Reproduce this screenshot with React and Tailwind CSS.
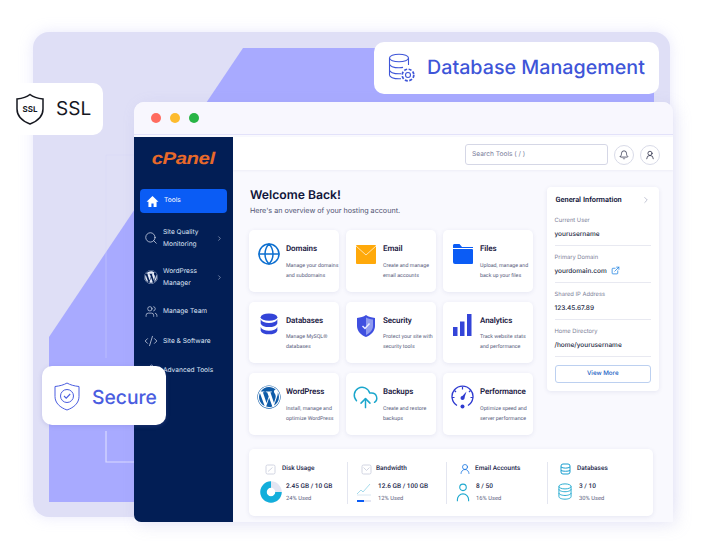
import React from "react";
import { Search, Users, CodeXml, Settings, ChevronRight, Globe, CloudUpload, Bell, UserRound, ExternalLink } from "lucide-react";
import { FaWordpress } from "react-icons/fa";

const Home = () => (
  <svg width="13" height="13" viewBox="0 0 24 24" fill="#fff"><path d="M12 2 1 12.500h3.500V22h5.500v-6.500h4V22h5.500v-9.500H23L12 2z" /></svg>
);

const Mail = () => (
  <svg width="22" height="21" viewBox="0 0 22 21"><rect x="1" y="1" width="20" height="19" fill="#ffa90a" rx="1" /><path d="M1 2 11 11 21 2" fill="none" stroke="#ffe3ae" strokeWidth="1" /></svg>
);
const Folder = () => (
  <svg width="22" height="22" viewBox="0 0 22 22"><path d="M1 2.500C1 1.600 1.600 1 2.500 1h5L10 4h-9z" fill="#0b5cf5" /><path d="M1 6h19a1 1 0 0 1 1 1v13a1 1 0 0 1-1 1H3a2 2 0 0 1-2-2z" fill="#0b5cf5" /><path d="M1 4.500h20" stroke="#0b5cf5" strokeWidth="1" /></svg>
);
const DbFilled = () => (
  <svg width="20" height="25" viewBox="0 0 18 24" fill="#3344d8"><ellipse cx="9" cy="4" rx="8" ry="3.500" /><path d="M1 6c1 2.500 4 3.500 8 3.500S16 8.500 17 6v4c-1 2.500-4 3.500-8 3.500S2 12.500 1 10z" /><path d="M1 12.500c1 2.500 4 3.500 8 3.500s7-1 8-3.500V16c-1 2.500-4 3.500-8 3.500S2 18.500 1 16z" transform="translate(0 1)" /></svg>
);
const ShieldFill = () => (
  <svg width="20" height="24" viewBox="0 0 20 24"><path d="M10 1C7.500 3 4.500 3.500 1 4v8c0 5 4 9 9 11 5-2 9-6 9-11V4c-3.500-.5-6.500-1-9-3z" fill="#3f4fe0" /><path d="M10 3.500v17.500c4-2 7-5 7-9V5.500C14 5.200 12 4.700 10 3.500z" fill="#8f9bf0" /><path d="M6.500 12l2.500 2.500 4.500-5" fill="none" stroke="#e9ebff" strokeWidth="1.500" /></svg>
);
const Bars = () => (
  <svg width="19" height="23" viewBox="0 0 19 23" fill="#3344d8"><rect x="0" y="13" width="4.500" height="9" /><rect x="7" y="7.500" width="4.500" height="14.500" /><rect x="14" y="0" width="4.500" height="22" /></svg>
);
const Gauge = () => (
  <svg width="23" height="24" viewBox="0 0 23 24" fill="none" stroke="#2f3bd0"><path d="M6 20.500A10.500 10.500 0 1 1 17 20.500" strokeWidth="1.300" /><path d="M11.500 2v2.500M3.500 5.500l1.500 1.500M1 12.500h2.500M19.500 5.500 18 7M22 12.500h-2.500" strokeWidth="1.200" /><path d="M10 12.500 15.500 6.500 13 14z" fill="#2f3bd0" stroke="none" /><circle cx="11.500" cy="13" r="2" fill="#2f3bd0" stroke="none" /><circle cx="11.500" cy="21.500" r="2" fill="#2f3bd0" stroke="none" /></svg>
);

const cards = [
  ["Domains", "Manage your domains", "and subdomains", <Globe size={24} color="#0c6fd0" strokeWidth={1.500} />],
  ["Email", "Create and manage", "email accounts", <Mail />],
  ["Files", "Upload, manage and", "back up your files", <Folder />],
  ["Databases", "Manage MySQL®", "databases", <DbFilled />],
  ["Security", "Protect your site with", "security tools", <ShieldFill />],
  ["Analytics", "Track website stats", "and performance", <Bars />],
  ["WordPress", "Install, manage and", "optimize WordPress", <FaWordpress size={24} color="#0e5ba8" />],
  ["Backups", "Create and restore", "backups", <CloudUpload size={27} color="#1aa6cc" strokeWidth={1.300} />],
  ["Performance", "Optimize speed and", "server performance", <Gauge />],
];

const info = [
  ["Current User", "yourusername"],
  ["Primary Domain", "yourdomain.com"],
  ["Shared IP Address", "123.45.67.89"],
  ["Home Directory", "/home/yourusername"],
];

const roboto = { fontFamily: "Roboto, 'Liberation Sans', sans-serif" };

function NavItem({ icon, children, arrow }) {
  return (
    <div className="flex items-center h-[24px] pl-[3.500px] pr-[4px] gap-[4.500px] text-[6.600px] leading-[12px] text-[#dfe5f5]">
      <span className="w-[15px] flex justify-center shrink-0">{icon}</span>
      <span className="flex-1 whitespace-nowrap">{children}</span>
      {arrow && <ChevronRight size={7} color="#b8c2da" />}
    </div>
  );
}

function Card({ title, a, b, icon }) {
  return (
    <div className="h-[61.500px] rounded-[5px] bg-white shadow-[0_1px_4px_rgba(60,70,140,0.10)] flex pl-[8px] pt-[11px]">
      <span className="w-[28px] h-[26px] flex items-center justify-center shrink-0 -ml-[2.500px]">{icon}</span>
      <div className="ml-[3.500px] pt-[2px] whitespace-nowrap" style={roboto}>
        <div className="text-[8px] leading-[12px] font-semibold text-[#1d2144] tracking-[-0.1px]">{title}</div>
        <div className="mt-[5.500px] text-[5.300px] leading-[10px] text-[#575c7c]">{a}<br />{b}</div>
      </div>
    </div>
  );
}

function Stat({ title, head, big, value, used, border, width, headCls, bodyCls, bigCls }) {
  return (
    <div className={`${width} h-[42px] ${border ? "border-r border-[#e4e6f0]" : ""}`}>
      <div className={`flex items-center h-[15px] ${headCls}`}>
        {head}
        <span className="text-[6.500px] font-medium text-[#22264a] whitespace-nowrap" style={roboto}>{title}</span>
      </div>
      <div className={`flex items-center mt-[3px] ${bodyCls}`}>
        <span className={`h-[24px] flex items-center justify-center shrink-0 ${bigCls}`}>{big}</span>
        <div className="whitespace-nowrap" style={roboto}>
          <div className="text-[6.500px] leading-[12px] font-medium text-[#22264a]">{value}</div>
          <div className="text-[5.800px] leading-[12px] mt-[1px] text-[#5c6180]">{used}</div>
        </div>
      </div>
    </div>
  );
}

export default function App() {
  return (
    <div className="relative w-[704px] h-[552px] overflow-hidden bg-white [text-rendering:geometricPrecision]" style={{ fontFamily: "Inter, 'Liberation Sans', sans-serif" }}>
      {/* backdrop */}
      <div className="absolute left-[33px] top-[32px] w-[637px] h-[485px] rounded-[16px] bg-[#dfdff6] shadow-[0_0_14px_rgba(190,190,245,0.35)]">
        <svg width="637" height="485" viewBox="0 0 637 485" className="block">
          <polygon points="210,16 621,16 621,470 16,470 16,305" fill="#a8aaff" />
          <path d="M101 123H73V326" fill="none" stroke="#d6d7fb" strokeWidth="1" opacity="0.4" />
          <path d="M73 367V335" fill="none" stroke="#d6d7fb" strokeWidth="1" />
          <path d="M73 399V430H102" fill="none" stroke="#d9daff" strokeWidth="1.200" />
        </svg>
      </div>

      {/* window */}
      <div className="absolute left-[134px] top-[102px] w-[539px] h-[420px] flex flex-col rounded-tl-[10px] rounded-tr-[10px] overflow-hidden bg-[#f9f9fe] shadow-[4px_4px_16px_rgba(150,150,210,0.18)]">
        <div className="h-[33px] shrink-0 bg-[#f8f7fe] border-b border-[#e3e2fa] flex items-center pl-[17px] gap-[9.500px]">
          <span className="w-[9.500px] h-[9.500px] rounded-full bg-[#ff6b5f]" />
          <span className="w-[9.500px] h-[9.500px] rounded-full bg-[#fdbb2e]" />
          <span className="w-[9.500px] h-[9.500px] rounded-full bg-[#28b446]" />
        </div>
        <div className="flex flex-1 min-h-0 mt-[2px]">
          <aside className="w-[99px] shrink-0 bg-[#021e55] rounded-bl-[7px] flex flex-col px-[6px]">
            <div className="h-[52px] flex justify-center items-center pb-[10px]">
              <span className="text-[17px] font-black italic text-[#e8692a] tracking-[-0.4px] leading-none scale-x-[1.2]" style={{ fontFamily: "'Liberation Sans', sans-serif" }}>cPanel</span>
            </div>
            <div className="h-[24px] rounded-[4px] bg-[#0a5cf5] flex items-center pl-[6px] gap-[5px] text-[6.600px] text-white">
              <Home />
              <span>Tools</span>
            </div>
            <div className="flex flex-col mt-[13px]">
              <NavItem icon={<Search size={14} color="#e5eaf7" strokeWidth={1.200} />} arrow>Site Quality<br />Monitoring</NavItem>
              <div className="mt-[15px]"><NavItem icon={<FaWordpress size={14} color="#e5eaf7" />} arrow>WordPress<br />Manager</NavItem></div>
              <div className="mt-[10px]"><NavItem icon={<Users size={13} color="#e5eaf7" strokeWidth={1.200} />}>Manage Team</NavItem></div>
              <div className="mt-[6px]"><NavItem icon={<CodeXml size={14} color="#e5eaf7" strokeWidth={1.200} />}>Site &amp; Software</NavItem></div>
              <div className="mt-[5px]"><NavItem icon={<Settings size={13} color="#e5eaf7" strokeWidth={1.200} />}>Advanced Tools</NavItem></div>
            </div>
          </aside>

          <main className="flex-1 min-w-0 flex flex-col">
            <div className="h-[33px] shrink-0 bg-white shadow-[0_1px_2px_rgba(80,90,150,0.07)] flex items-center justify-end gap-[6px] pr-[13px] pt-[2px]">
              <div className="w-[143px] h-[21px] rounded-[3px] border border-[#d5d7e6] flex items-center pl-[6px] text-[6.600px] text-[#7c809c]">Search Tools ( / )</div>
              <span className="w-[20px] h-[20px] rounded-full border border-[#d9dbe8] flex items-center justify-center"><Bell size={10} color="#1b1e3a" strokeWidth={1.700} /></span>
              <span className="w-[20px] h-[20px] rounded-full border border-[#d9dbe8] flex items-center justify-center"><UserRound size={10} color="#1b1e3a" strokeWidth={1.700} /></span>
            </div>

            <div className="flex-1 min-h-0 pl-[16px] pr-[14px] pt-[17px]">
              <div className="flex justify-between">
                <div className="w-[284px]">
                  <div className="pl-[1px] text-[12.200px] leading-[16px] font-semibold text-[#10143a]">Welcome Back!</div>
                  <div className="pl-[1px] text-[7.200px] leading-[11px] mt-[2px] text-[#4f5372]">Here's an overview of your hosting account.</div>
                  <div className="grid grid-cols-3 gap-x-[7px] gap-y-[10px] mt-[14px]">
                    {cards.map(([t, a, b, i]) => <Card key={t} title={t} a={a} b={b} icon={i} />)}
                  </div>
                </div>
                <div className="w-[112.500px] h-[204px] rounded-[4px] bg-white shadow-[0_1px_4px_rgba(60,70,140,0.10)] px-[8px] pt-[8px]">
                  <div className="flex items-center justify-between h-[10px] mb-[3.500px] pl-[1px]">
                    <span className="text-[7.400px] font-semibold text-[#14183c]" style={roboto}>General Information</span>
                    <ChevronRight size={10} color="#b5b8ca" />
                  </div>
                  {info.map(([k, v], i) => (
                    <div key={k} className="border-b border-[#e8e9f1] h-[37px] pt-[7px]">
                      <div className="text-[5.800px] leading-[10px] text-[#7c8098]">{k}</div>
                      <div className="flex items-center gap-[4px] mt-[3px] text-[6.500px] leading-[10px] font-medium text-[#1b1f42]">
                        {v}
                        {i === 1 && <ExternalLink size={9} color="#1a7fe0" />}
                      </div>
                    </div>
                  ))}
                  <div className="mt-[8px] h-[18px] rounded-[3px] border border-[#bcd0f0] flex items-center justify-center text-[6.200px] font-medium text-[#1c5fc4]">View More</div>
                </div>
              </div>

              <div className="mt-[14px] w-[403.500px] h-[67px] rounded-[5px] bg-white shadow-[0_1px_4px_rgba(60,70,140,0.10)] flex items-start pt-[13px]">
                <Stat width="w-[99px]" border title="Disk Usage" value="2.45 GB / 10 GB" used="24% Used" headCls="pl-[16px] gap-[6px]" bodyCls="pl-[11px] gap-[4px]" bigCls="w-[22px]"
                  head={<svg width="11" height="11" viewBox="0 0 11 11" fill="none" stroke="#c7cadb" strokeWidth="0.800"><rect x="1" y="1" width="9" height="9" rx="1.500" /><path d="M3 7.500 7.500 3.500" /></svg>}
                  big={<svg width="22" height="22" viewBox="0 0 22 22"><circle cx="11" cy="11" r="7.500" fill="none" stroke="#e3e5f2" strokeWidth="6.500" /><path d="M11 3.500a7.500 7.500 0 1 0 7.500 7.500" fill="none" stroke="#13aedb" strokeWidth="6.500" /></svg>} />
                <Stat width="w-[99px]" border title="Bandwidth" value="12.6 GB / 100 GB" used="12% Used" headCls="pl-[13px] gap-[4px]" bodyCls="pl-[9px] gap-[7px]" bigCls="w-[14px]"
                  head={<svg width="11" height="11" viewBox="0 0 11 11" fill="none" stroke="#c7cadb" strokeWidth="0.800"><rect x="1" y="1" width="9" height="9" rx="1.500" /><path d="M2.500 3.500 5.500 6.500 8.500 3.500" /></svg>}
                  big={<svg width="14" height="22" viewBox="0 0 14 22" fill="none"><path d="M0 13 4 9 6 11 13 3" stroke="#8fd2e6" strokeWidth="0.800" /><path d="M0 14h14" stroke="#d9e8f2" strokeWidth="1" /><rect x="0" y="19" width="14" height="2" fill="#e4e6f2" /><rect x="0" y="19" width="7" height="2" fill="#0b5cf5" /></svg>} />
                <Stat width="w-[101px]" border title="Email Accounts" value="8 / 50" used="16% Used" headCls="pl-[12px] gap-[4px]" bodyCls="pl-[9px] gap-[6px]" bigCls="w-[14px]"
                  head={<UserRound size={12} color="#0d6fe0" strokeWidth={1.500} />}
                  big={<svg width="15" height="21" viewBox="0 0 15 21" fill="none" stroke="#1fa9cf" strokeWidth="1.200"><circle cx="7.500" cy="5" r="3.500" /><path d="M1.500 20v-2a6 6 0 0 1 12 0v2" /></svg>} />
                <Stat width="w-[104px]" title="Databases" value="3 / 10" used="30% Used" headCls="pl-[12px] gap-[6px]" bodyCls="pl-[10px] gap-[7px]" bigCls="w-[14px]"
                  head={<svg width="11" height="12" viewBox="0 0 11 12" fill="none" stroke="#1a9fd0" strokeWidth="1"><rect x="1" y="1" width="9" height="10" rx="2" /><path d="M1 4c2 1.500 7 1.500 9 0M1 7.500c2 1 7 1 9 0" /></svg>}
                  big={<svg width="15" height="20" viewBox="0 0 15 19" fill="none" stroke="#1fa9cf" strokeWidth="1"><ellipse cx="7.500" cy="3.500" rx="6.500" ry="2.700" /><path d="M1 3.500v3c0 1.500 3 2.700 6.500 2.700S14 8 14 6.500v-3M1 6.500v4c0 1.500 3 2.700 6.500 2.700S14 12 14 10.500v-4M1 10.500v4c0 1.500 3 2.700 6.500 2.700S14 16 14 14.500v-4" /></svg>} />
              </div>
            </div>
          </main>
        </div>
      </div>

      {/* floating badges */}
      <div className="absolute left-0 top-[83px] w-[103px] h-[52px] rounded-r-[10px] bg-white flex items-center pl-[15px] gap-[11px]">
        <svg width="30" height="32" viewBox="0 0 30 32" fill="none" stroke="#15171f" strokeWidth="1.500">
          <path d="M15 1.500c-3 2.500-7.500 4-13 4.500v10c0 7 5 12 13 15 8-3 13-8 13-15V6c-5.500-.5-10-2-13-4.500z" />
          <text x="15" y="18.800" textAnchor="middle" fontSize="8" fontWeight="700" fill="#15171f" stroke="none" fontFamily="Inter, sans-serif">SSL</text>
        </svg>
        <span className="text-[19px] font-normal text-[#15171f]">SSL</span>
      </div>

      <div className="absolute left-[374px] top-[42px] w-[285px] h-[52px] rounded-[10px] bg-white flex items-center pl-[14px] gap-[12px]">
        <svg width="27" height="30" viewBox="0 0 27 30" fill="none" stroke="#3e55d8" strokeWidth="1.100">
          <ellipse cx="11" cy="5" rx="9.500" ry="3.800" />
          <path d="M1.500 5v6c0 2 4 3.800 9.500 3.800 1.500 0 3-.1 4-.4M20.500 5v7M1.500 11v6c0 2 4 3.800 9.500 3.800h2M1.500 17v5c0 2 4 3.800 9.500 3.800h2" />
          <circle cx="20" cy="22" r="2.500" />
          <circle cx="20" cy="22" r="5.800" strokeDasharray="3 1.550" strokeWidth="1.700" />
        </svg>
        <span className="text-[19.700px] font-medium text-[#3e55d8] whitespace-nowrap">Database Management</span>
      </div>

      <div className="absolute left-[42px] top-[366px] w-[124px] h-[59px] rounded-[10px] bg-white shadow-[0_1px_4px_rgba(110,110,200,0.25)] flex items-center pl-[12px] gap-[12px] pt-[2px]">
        <svg width="26" height="29" viewBox="0 0 26 29" fill="none" stroke="#4a5de0" strokeWidth="1">
          <path d="M13 1C10 2.800 6 4 1 4.500v10C1 21 6 25.500 13 28c7-2.500 12-7 12-13.500v-10C20 4 16 2.800 13 1z" />
          <circle cx="13" cy="14" r="6.500" />
          <path d="M10 14l2.200 2.200L16.200 12" strokeWidth="1.100" />
        </svg>
        <span className="text-[19.300px] font-medium text-[#4a5de0] relative top-[1px]">Secure</span>
      </div>
    </div>
  );
}
